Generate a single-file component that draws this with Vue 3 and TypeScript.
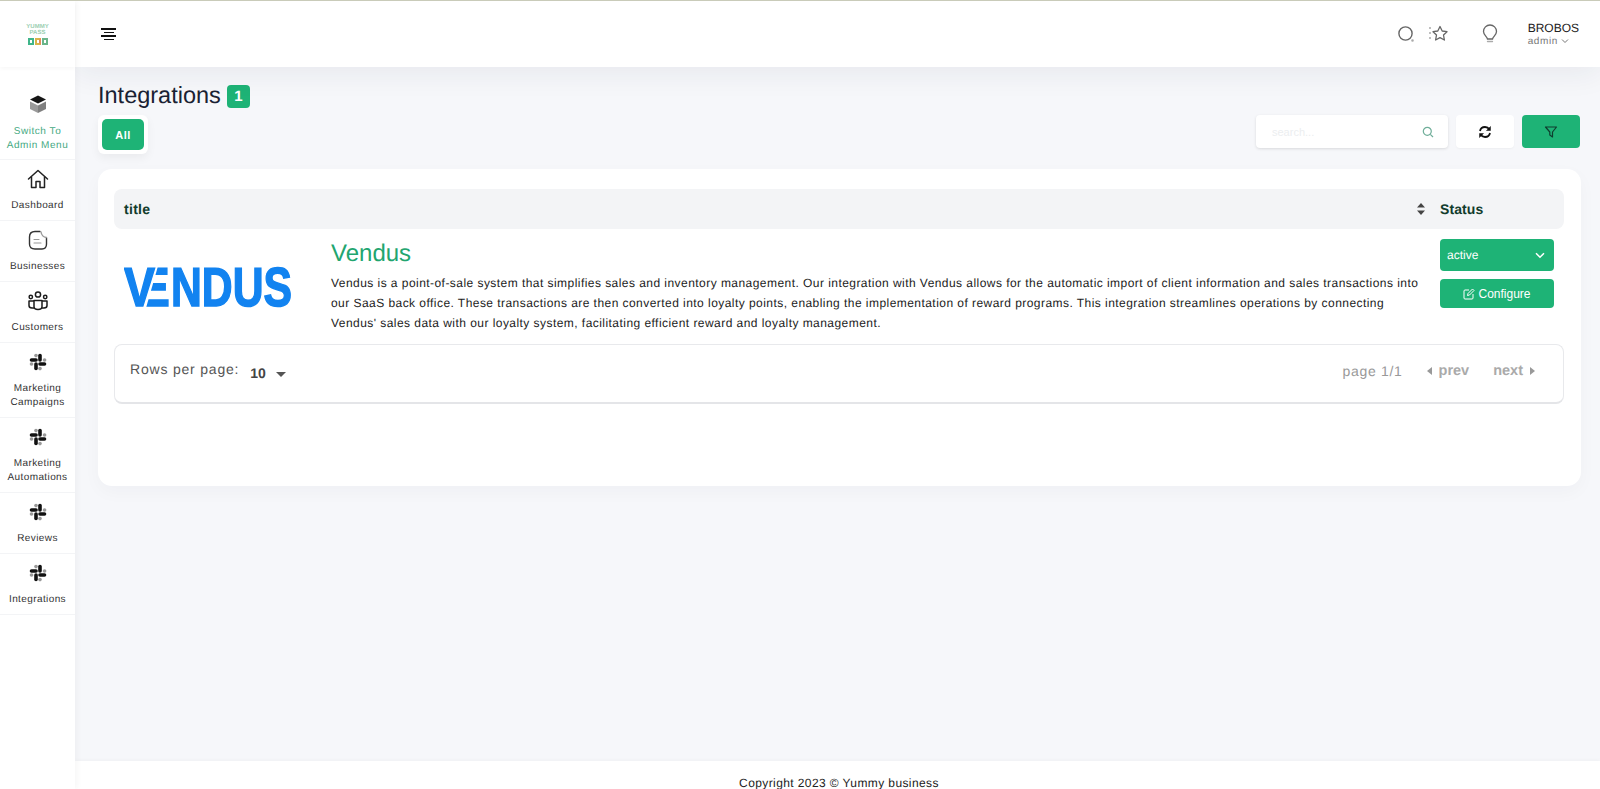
<script setup lang="ts">
const menu = [
  { label: ['Dashboard'], icon: 'home' },
  { label: ['Businesses'], icon: 'note' },
  { label: ['Customers'], icon: 'users' },
  { label: ['Marketing', 'Campaigns'], icon: 'slack' },
  { label: ['Marketing', 'Automations'], icon: 'slack' },
  { label: ['Reviews'], icon: 'slack' },
  { label: ['Integrations'], icon: 'slack' },
];
</script>

<template>
  <div class="page">
    <aside class="sidebar">
      <div class="logo">
        <div class="logo-text">YUMMY<br />PASS</div>
        <div class="logo-qr">
          <span class="qr-a"></span>
          <span class="qr-b"></span>
          <span class="qr-c"></span>
        </div>
      </div>
      <nav class="menu">
        <a class="switch">
          <svg width="20" height="20" viewBox="0 0 20 20">
            <path d="M10 1.500 18 5.500 10 9.500 2 5.500Z" fill="#151515" />
            <path d="M2 7.500 10 11.500V19L2 15Z" fill="#9a9a9a" />
            <path d="M18 7.500 10 11.500V19L18 15Z" fill="#808080" />
          </svg>
          <span>Switch To</span>
          <span>Admin Menu</span>
        </a>
        <a v-for="item in menu" :key="item.label.join()" class="menu-item">
          <svg v-if="item.icon === 'home'" width="22" height="22" viewBox="0 0 22 22" fill="none" stroke="#222" stroke-width="1.500" stroke-linejoin="round" stroke-linecap="round">
            <path d="M1.500 11 11 2.500 20.500 11" />
            <path d="M4.500 9V19.500H9V13.500H13V19.500H17.500V9" />
          </svg>
          <svg v-else-if="item.icon === 'note'" width="22" height="22" viewBox="0 0 22 22" fill="none" stroke="#333" stroke-width="1.400" stroke-linecap="round">
            <path d="M13 2.500H8C4.500 2.500 2.500 4.500 2.500 8V15C2.500 18 4.500 20 8 20H15C18 20 19.500 18 19.500 15V9" />
            <path d="M14 3C14.500 6 16 8 19.500 8.500" stroke="#999" />
            <path d="M7 10.500H12M7 14H14" stroke="#999" stroke-width="1.100" />
          </svg>
          <svg v-else-if="item.icon === 'users'" width="22" height="22" viewBox="0 0 22 22" fill="none" stroke="#1c1c1c" stroke-width="1.500" stroke-linejoin="round">
            <circle cx="11" cy="4.500" r="2.600" />
            <circle cx="3.800" cy="7" r="1.700" />
            <circle cx="18.200" cy="7" r="1.700" />
            <path d="M7 10.500H15V16.500C15 18.500 13 19.500 11 19.500S7 18.500 7 16.500Z" />
            <path d="M7 11H2V15.500C2 17 3.200 18 5 18H7M15 11H20V15.500C20 17 18.800 18 17 18H15" />
          </svg>
          <svg v-else width="20" height="20" viewBox="0 0 20 20" fill="none" stroke-width="3.600" stroke-linecap="round">
            <path d="M3.500 8H8" stroke="#111" />
            <path d="M12 3.500V8" stroke="#111" />
            <path d="M12 12H16.500" stroke="#111" />
            <path d="M8 12V16.500" stroke="#111" />
            <path d="M8 3.500V3.600" stroke="#999" />
            <path d="M16.500 8H16.600" stroke="#999" />
            <path d="M12 16.500V16.600" stroke="#999" />
            <path d="M3.500 12H3.600" stroke="#999" />
          </svg>
          <span v-for="line in item.label" :key="line">{{ line }}</span>
        </a>
      </nav>
    </aside>

    <div class="main">
      <header class="topbar">
        <button class="burger">
          <span></span><span class="short"></span><span></span><span class="short"></span>
        </button>
        <div class="top-actions">
          <svg class="t-search" width="18" height="18" viewBox="0 0 18 18" fill="none" stroke="#666" stroke-width="1.400">
            <circle cx="8.500" cy="8.500" r="6.600" />
            <circle cx="15.500" cy="15.500" r="0.600" stroke="#aaa" />
          </svg>
          <svg class="t-star" width="20" height="18" viewBox="0 0 20 18" fill="none" stroke="#666" stroke-width="1.300" stroke-linejoin="round">
            <path d="M12 1.500 14.200 6 19 6.700 15.500 10 16.400 15 12 12.600 7.600 15 8.500 10 5 6.700 9.800 6Z" />
            <path d="M1 3H4M1 8H3M1 13H3" stroke="#aaa" stroke-dasharray="2 1" />
          </svg>
          <svg class="t-bulb" width="16" height="20" viewBox="0 0 16 20" fill="none" stroke="#666" stroke-width="1.300" stroke-linecap="round">
            <path d="M5.500 15C5 12.500 1.500 11 1.500 7.500A6.500 6.500 0 0 1 14.500 7.500C14.500 11 11 12.500 10.500 15Z" />
            <path d="M5.500 17.500H10.500" stroke="#aaa" />
          </svg>
          <div class="user">
            <div class="user-name">BROBOS</div>
            <div class="user-role">admin
              <svg width="8" height="6" viewBox="0 0 8 6" fill="none" stroke="#777" stroke-width="1"><path d="M1 1.500 4 4.500 7 1.500" /></svg>
            </div>
          </div>
        </div>
      </header>

      <main class="content">
        <div class="heading">
          <h1>Integrations</h1>
          <span class="badge">1</span>
        </div>
        <div class="toolbar">
          <div class="tab-wrap"><button class="tab">All</button></div>
          <div class="tools">
            <div class="search">
              <input type="text" placeholder="search..." />
              <svg width="12" height="12" viewBox="0 0 12 12" fill="none" stroke="#6fae99" stroke-width="1.200">
                <circle cx="5.300" cy="5.300" r="4" />
                <path d="M8.300 8.300 11 11" />
              </svg>
            </div>
            <button class="tool-btn">
              <svg width="14" height="14" viewBox="0 0 14 14" fill="none" stroke="#111" stroke-width="1.800">
                <path d="M2 6C2.500 3.500 4.500 2 7 2C9 2 10.500 3 11.500 4.500" />
                <path d="M12 8C11.500 10.500 9.500 12 7 12C5 12 3.500 11 2.500 9.500" />
                <path d="M12.500 1.500V5.500H8.500L12.500 1.500ZM1.500 12.500V8.500H5.500L1.500 12.500Z" fill="#111" stroke-width="0.500" />
              </svg>
            </button>
            <button class="filter-btn">
              <svg width="14" height="14" viewBox="0 0 14 14" fill="none" stroke="#0f3d2e" stroke-width="1.200" stroke-linejoin="round">
                <path d="M1.500 2H12.500L8.500 7V12L5.800 10V7Z" />
              </svg>
            </button>
          </div>
        </div>

        <section class="card">
          <div class="thead">
            <span class="th-title">title</span>
            <svg class="sort" width="8" height="12" viewBox="0 0 8 12" fill="#444">
              <path d="M4 0 8 4.500H0ZM4 12 0 7.500H8Z" />
            </svg>
            <span class="th-status">Status</span>
          </div>
          <div class="row">
            <div class="row-logo">
              <svg width="168" height="42" viewBox="0 0 168 42" class="vendus" aria-label="Vendus">
                <g font-family="Liberation Sans, sans-serif" font-weight="700" font-size="55" fill="#1283f0" stroke="#1283f0" stroke-width="1.500">
                  <text x="10" y="40" textLength="36" lengthAdjust="spacingAndGlyphs">E</text>
                  <polygon points="0,0 34,0 22,42 0,42" fill="#fff" stroke="none" />
                  <text x="0" y="40" textLength="31" lengthAdjust="spacingAndGlyphs">V</text>
                  <text x="47" y="40" textLength="121" lengthAdjust="spacingAndGlyphs">NDUS</text>
                </g>
              </svg>
            </div>
            <div class="row-body">
              <h2>Vendus</h2>
              <p>Vendus is a point-of-sale system that simplifies sales and inventory management. Our integration with Vendus allows for the automatic import of client information and sales transactions into our SaaS back office. These transactions are then converted into loyalty points, enabling the implementation of reward programs. This integration streamlines operations by connecting Vendus' sales data with our loyalty system, facilitating efficient reward and loyalty management.</p>
            </div>
            <div class="row-actions">
              <div class="status-select">
                <span>active</span>
                <svg width="10" height="7" viewBox="0 0 10 7" fill="none" stroke="#fff" stroke-width="1.500"><path d="M1 1.200 5 5.200 9 1.200" /></svg>
              </div>
              <button class="configure">
                <svg width="12" height="12" viewBox="0 0 12 12" fill="none" stroke="#fff" stroke-width="1">
                  <path d="M6 2H2A1 1 0 0 0 1 3V10A1 1 0 0 0 2 11H9A1 1 0 0 0 10 10V6" />
                  <path d="M4.500 7.500 5 5.500 9.500 1 11 2.500 6.500 7Z" />
                </svg>
                Configure
              </button>
            </div>
          </div>
          <div class="pager">
            <div class="rows">
              <span class="rows-label">Rows per page:</span>
              <span class="rows-value">10</span>
              <span class="caret"></span>
            </div>
            <div class="pages">
              <span class="page-no">page 1/1</span>
              <span class="nav"><i class="tri left"></i>prev</span>
              <span class="nav">next<i class="tri right"></i></span>
            </div>
          </div>
        </section>
      </main>

      <footer class="footer">Copyright 2023 © Yummy business</footer>
    </div>
  </div>
</template>

<style>
html, body {
  margin: 0;
  overflow: hidden;
}
</style>

<style scoped>
.page {
  display: flex;
  height: 789px;
  overflow: hidden;
  background: #f6f7fa;
  border-top: 1px solid #c9cbb9;
  box-sizing: border-box;
  font-family: "Liberation Sans", Arial, sans-serif;
  text-rendering: geometricPrecision;
}

.sidebar {
  width: 75px;
  flex: none;
  background: #fff;
  box-shadow: 2px 0 6px rgba(0, 0, 0, 0.04);
  z-index: 3;
}

.logo {
  height: 66px;
  display: flex;
  flex-direction: column;
  align-items: center;
  justify-content: center;
  box-shadow: 0 2px 4px rgba(0, 0, 0, 0.03);
}

.logo-text {
  font-size: 6px;
  font-weight: 700;
  line-height: 6.500px;
  color: #9ccfb2;
  text-align: center;
}

.logo-qr {
  display: flex;
  gap: 1px;
  margin-top: 1px;
}

.logo-qr span {
  width: 6px;
  height: 7px;
  border: 2px solid #3fb58a;
  box-sizing: border-box;
}

.logo-qr .qr-b {
  border-color: #d9b54a;
  border-right-color: #e58a5a;
}

.logo-qr .qr-c {
  border-color: #6ab58a;
  border-style: dashed;
}

.menu {
  margin-top: 5px;
  display: flex;
  flex-direction: column;
}

.switch,
.menu-item {
  display: flex;
  flex-direction: column;
  align-items: center;
  border-bottom: 1px solid #f3f4f6;
  font-size: 10px;
  line-height: 14px;
  letter-spacing: 0.550px;
  color: #333;
  white-space: nowrap;
}

.switch {
  height: 88px;
  box-sizing: border-box;
  padding-top: 22px;
  color: #45a97f;
}

.switch svg {
  margin-bottom: 11px;
}

.menu-item {
  padding: 8px 0 7px;
  letter-spacing: 0.400px;
}

.menu-item svg {
  margin-bottom: 9px;
  height: 22px;
}

.main {
  flex: 1;
  min-width: 0;
  display: flex;
  flex-direction: column;
}

.topbar {
  height: 66px;
  flex: none;
  background: #fff;
  display: flex;
  align-items: center;
  justify-content: space-between;
  padding: 0 21px 0 26px;
  box-shadow: 0 6px 30px rgba(30, 40, 70, 0.07);
  z-index: 2;
}

.burger {
  border: 0;
  background: none;
  padding: 0;
  display: flex;
  flex-direction: column;
  align-items: center;
  gap: 2px;
  width: 15px;
}

.burger span {
  width: 15px;
  height: 1.500px;
  background: #111;
}

.burger .short {
  width: 10px;
}

.top-actions {
  display: flex;
  align-items: center;
}

.t-search {
  margin-right: 13px;
}

.t-star {
  margin-right: 34px;
}

.t-bulb {
  margin-right: 30px;
}

.user {
  margin-top: 2px;
}

.user-name {
  font-size: 12px;
  line-height: 14px;
  color: #222;
}

.user-role {
  font-size: 10px;
  line-height: 14px;
  letter-spacing: 0.600px;
  color: #777;
}

.content {
  flex: 1;
  min-height: 0;
  padding: 14px 19px 0 23px;
}

.heading {
  display: flex;
  align-items: center;
  gap: 6px;
  height: 28px;
}

.heading h1 {
  margin: 0;
  font-size: 23.500px;
  font-weight: 400;
  color: #1a2233;
}

.badge {
  width: 23px;
  height: 23px;
  margin-top: 2px;
  border-radius: 4px;
  background: #1eb376;
  color: #fff;
  font-size: 15px;
  font-weight: 700;
  line-height: 23px;
  text-align: center;
}

.toolbar {
  display: flex;
  justify-content: space-between;
  margin-top: 6px;
  height: 43px;
}

.tab-wrap {
  align-self: flex-start;
  padding: 4px;
  border-radius: 6px;
  background: #fff;
  box-shadow: 0 4px 10px rgba(0, 0, 0, 0.05);
}

.tab {
  display: block;
  width: 42px;
  height: 31px;
  border: 0;
  border-radius: 5px;
  background: #1eb376;
  color: #fff;
  font: 700 11px "Liberation Sans", Arial, sans-serif;
  letter-spacing: 0.500px;
}

.tools {
  display: flex;
  align-items: flex-start;
  gap: 8px;
  margin-right: 1px;
}

.search {
  width: 192px;
  height: 33px;
  box-sizing: border-box;
  background: #fff;
  border-radius: 4px;
  box-shadow: 0 1px 3px rgba(0, 0, 0, 0.12);
  display: flex;
  align-items: center;
  padding-right: 14px;
}

.search input {
  flex: 1;
  min-width: 0;
  border: 0;
  outline: 0;
  background: none;
  padding-left: 16px;
  font: 11px "Liberation Sans", Arial, sans-serif;
}

.search input::placeholder {
  color: #eceef0;
}

.tool-btn,
.filter-btn {
  width: 58px;
  height: 33px;
  border: 0;
  border-radius: 4px;
  padding: 0;
  display: flex;
  align-items: center;
  justify-content: center;
}

.tool-btn {
  background: #fff;
  box-shadow: 0 1px 2px rgba(0, 0, 0, 0.04);
}

.filter-btn {
  background: #1eb376;
}

.card {
  margin-top: 11px;
  height: 317px;
  box-sizing: border-box;
  background: #fff;
  border-radius: 14px;
  padding: 20px 17px 0 16px;
  box-shadow: 0 6px 18px rgba(30, 40, 70, 0.03);
}

.thead {
  height: 40px;
  background: #f3f4f6;
  border-radius: 8px;
  display: flex;
  align-items: center;
  font-size: 14px;
  font-weight: 700;
  letter-spacing: 0.300px;
  color: #123c2d;
  padding-left: 10px;
}

.th-title {
  flex: 1;
}

.sort {
  margin-right: 15px;
}

.th-status {
  width: 124px;
  letter-spacing: 0.100px;
}

.row {
  display: flex;
  height: 115px;
}

.row-logo {
  width: 217px;
  flex: none;
  padding: 37px 0 0 10px;
  box-sizing: border-box;
}

.vendus {
  display: block;
}

.row-body {
  flex: 1;
  min-width: 0;
  padding-top: 11px;
}

.row-body h2 {
  margin: 0 0 5px;
  font-size: 24px;
  line-height: 28px;
  font-weight: 400;
  color: #22a56f;
}

.row-body p {
  margin: 0;
  font-size: 12px;
  line-height: 20px;
  letter-spacing: 0.450px;
  color: #222;
}

.row-actions {
  width: 114px;
  flex: none;
  margin: 10px 10px 0 20px;
  display: flex;
  flex-direction: column;
  gap: 8px;
}

.status-select {
  height: 32px;
  border-radius: 4px;
  background: #1eb376;
  color: #fff;
  font-size: 12px;
  display: flex;
  align-items: center;
  justify-content: space-between;
  padding: 0 9px 0 7px;
}

.configure {
  height: 29px;
  border: 0;
  border-radius: 4px;
  background: #1eb376;
  color: #fff;
  font: 12px "Liberation Sans", Arial, sans-serif;
  display: flex;
  align-items: center;
  justify-content: center;
  gap: 3px;
}

.pager {
  height: 60px;
  box-sizing: border-box;
  border: 1px solid #e8e9ec;
  border-bottom: 2px solid #e4e5e8;
  border-radius: 8px;
  display: flex;
  justify-content: space-between;
  padding: 16px 28px 0 15px;
}

.rows {
  display: flex;
  align-items: flex-start;
}

.rows-label {
  font-size: 14px;
  letter-spacing: 0.800px;
  color: #555;
}

.rows-value {
  margin: 4px 0 0 11px;
  font-size: 14px;
  font-weight: 700;
  color: #444;
}

.caret {
  margin: 11px 0 0 10px;
  border: 5px solid transparent;
  border-top-color: #555;
  border-bottom: 0;
}

.pages {
  display: flex;
  align-items: center;
  height: 20px;
  color: #aaa;
  font-size: 14.500px;
  gap: 24px;
}

.page-no {
  letter-spacing: 0.700px;
  font-weight: 400;
  color: #999;
  font-size: 14px;
}

.nav {
  font-weight: 700;
  display: flex;
  align-items: center;
  gap: 7px;
}

.tri {
  border: 4px solid transparent;
}

.tri.left {
  border-left: 0;
  border-right: 5px solid #999;
}

.tri.right {
  border-right: 0;
  border-left: 5px solid #999;
}

.footer {
  height: 28px;
  flex: none;
  box-sizing: border-box;
  background: #fff;
  text-align: center;
  font-size: 12px;
  line-height: 14px;
  letter-spacing: 0.400px;
  color: #222;
  padding: 15px 0 0 3px;
  box-shadow: 0 -1px 4px rgba(0, 0, 0, 0.03);
}
</style>
